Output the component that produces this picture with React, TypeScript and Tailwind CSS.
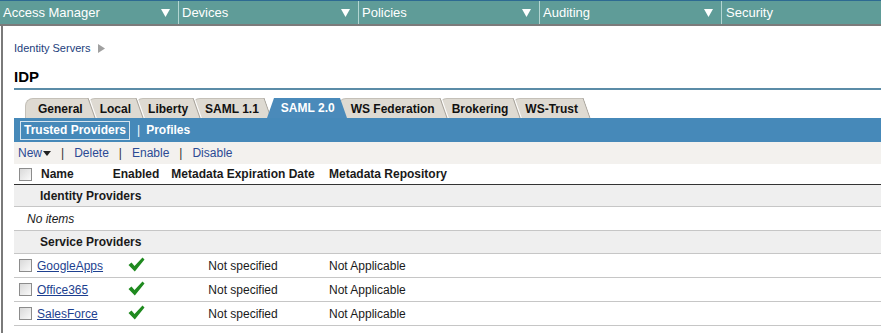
import React from 'react';

const font = "font-['Liberation_Sans',Arial,sans-serif]";

const menus = [
  { label: 'Access Manager', w: 'w-[178px]' },
  { label: 'Devices', w: 'w-[179px]' },
  { label: 'Policies', w: 'w-[180px]' },
  { label: 'Auditing', w: 'w-[181px]' },
];

const tabs = ['General', 'Local', 'Liberty', 'SAML 1.1', 'SAML 2.0', 'WS Federation', 'Brokering', 'WS-Trust'];
const tabZ = ['z-[8]', 'z-[7]', 'z-[6]', 'z-[5]', 'z-[20]', 'z-[3]', 'z-[2]', 'z-[1]'];

const providers = ['GoogleApps', 'Office365', 'SalesForce'];

const Caret = () => (
  <svg width="9" height="8" viewBox="0 0 9 8">
    <polygon points="0,0 9,0 4.5,8" fill="#ffffff" />
  </svg>
);

const Checkbox = () => (
  <span className="block w-[13px] h-[13px] border border-[#8c8c8c] bg-linear-to-br from-[#d9d9d9] to-[#fafafa]" />
);

const CheckMark = () => (
  <svg width="17" height="15" viewBox="0 0 17 15">
    <polygon points="0.5,8 3.5,5.5 6.5,9 14.5,0.5 16.5,2.5 6.8,14.5" fill="#1f8a1f" />
  </svg>
);

const Tab: React.FC<{ label: string; active: boolean; z: string }> = ({ label, active, z }) => {
  if (active) {
    return (
      <div className={`relative flex h-[20px] ml-[4px] -mr-[9px] ${z}`}>
        <svg width="10" height="20" viewBox="0 0 10 20">
          <polygon points="7,0 10,0 10,20 0,20" fill="#4a8aba" />
        </svg>
        <div className="flex items-center pl-[4px] pr-[2px] bg-[#4a8aba] text-white text-[12px] font-bold">{label}</div>
        <svg width="10" height="20" viewBox="0 0 10 20">
          <polygon points="0,0 3,0 10,20 0,20" fill="#4a8aba" />
        </svg>
      </div>
    );
  }
  return (
    <div className={`relative flex h-[20px] -mr-[10px] ${z}`}>
      <div className="flex items-center pl-[12px] pr-[2px] rounded-tl-[8px] bg-[#dedad2] border-t border-l border-[#c4c0b8] text-[12px] font-bold text-[#111]">
        {label}
      </div>
      <svg width="12" height="20" viewBox="0 0 12 20">
        <polygon points="0,0 3,0 10,20 0,20" fill="#dedad2" />
        <line x1="0" y1="0.5" x2="3" y2="0.5" stroke="#c4c0b8" />
        <line x1="3" y1="0" x2="10" y2="20" stroke="#a8a49c" />
        <line x1="4.3" y1="0" x2="11.3" y2="20" stroke="#ffffff" />
      </svg>
    </div>
  );
};

export default function App() {
  return (
    <div className={`w-[881px] h-[333px] bg-white overflow-hidden ${font}`}>
      {/* top menu */}
      <div className="flex h-[26px] bg-[#5f9c98] border-t border-t-[#2d6a92] border-b-2 border-b-[#7b7b7b] text-white text-[13px]">
        {menus.map((m) => (
          <React.Fragment key={m.label}>
            <div className={`${m.w} flex items-center justify-between pl-[3px] pr-[8px]`}>
              <span>{m.label}</span>
              <Caret />
            </div>
            <div className="w-px bg-[#b3d5d2]" />
          </React.Fragment>
        ))}
        <div className="flex-1 flex items-center pl-[4px]">Security</div>
      </div>

      <div className="ml-[1px] border-l-2 border-[#7a7a7a] h-[307px] pl-[11px]">
        {/* breadcrumb */}
        <div className="flex items-center gap-[8px] pt-[15px] h-[29px] text-[11px] text-[#23407c]">
          <span>Identity Servers</span>
          <svg width="7" height="9" viewBox="0 0 7 9">
            <polygon points="0,0 7,4.5 0,9" fill="#a0a0a0" />
          </svg>
        </div>

        <div className="mt-[13px] pb-[2px] border-b-2 border-[#5b8ca7] text-[15px] leading-[18px] font-bold text-black">IDP</div>

        {/* tabs */}
        <div className="flex items-end mt-[8px] pl-[11px] h-[20px]">
          {tabs.map((t, i) => (
            <Tab key={t} label={t} active={t === 'SAML 2.0'} z={tabZ[i]} />
          ))}
        </div>

        {/* sub nav */}
        <div className="relative z-[30] flex items-center h-[24px] bg-[#4689b9] pl-[6px] text-white text-[12px] font-bold">
          <span className="border border-[#d6e4ee] px-[3px] h-[19px] flex items-center">Trusted Providers</span>
          <span className="ml-[7px] font-normal">|</span>
          <span className="ml-[6px]">Profiles</span>
        </div>

        {/* actions */}
        <div className="flex items-center h-[22px] pl-[4px] bg-[#f3f1ee] text-[12px] text-[#2b4a94]">
          <span>New</span>
          <svg width="8" height="5" viewBox="0 0 8 5" className="ml-[1px]">
            <polygon points="0,0 8,0 4,5" fill="#222" />
          </svg>
          <span className="mx-[10px] text-[#333]">|</span>
          <span>Delete</span>
          <span className="mx-[10px] text-[#333]">|</span>
          <span>Enable</span>
          <span className="mx-[10px] text-[#333]">|</span>
          <span>Disable</span>
        </div>

        {/* table */}
        <div className="text-[12px] text-[#1a1a1a]">
          <div className="grid grid-cols-[22px_72px_56px_158px_1fr] items-center h-[21px] border-b border-[#333] font-bold">
            <span className="pl-[5px]"><Checkbox /></span>
            <span className="pl-[5px]">Name</span>
            <span className="text-center">Enabled</span>
            <span className="text-center">Metadata Expiration Date</span>
            <span className="pl-[7px]">Metadata Repository</span>
          </div>

          <div className="flex items-center h-[22px] pl-[26px] bg-[#efefef] border-b border-[#c6c6c6] font-bold">Identity Providers</div>
          <div className="flex items-center h-[24px] pl-[13px] border-b border-[#c6c6c6] italic">No items</div>
          <div className="flex items-center h-[23px] pl-[26px] bg-[#efefef] border-b border-[#c6c6c6] font-bold">Service Providers</div>

          {providers.map((p) => (
            <div key={p} className="grid grid-cols-[22px_72px_56px_158px_1fr] items-center h-[24px] border-b border-[#c6c6c6]">
              <span className="pl-[5px]"><Checkbox /></span>
              <span className="pl-[1px] text-[#1d3f8f] underline">{p}</span>
              <span className="flex justify-center -mt-[3px]"><CheckMark /></span>
              <span className="text-center">Not specified</span>
              <span className="pl-[7px]">Not Applicable</span>
            </div>
          ))}
        </div>
      </div>
    </div>
  );
}
